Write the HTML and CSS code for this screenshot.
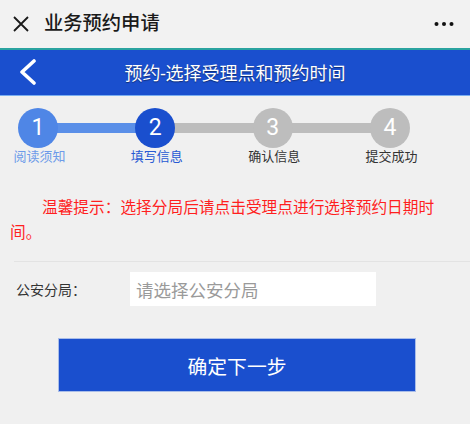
FILE: index.html
```html
<!DOCTYPE html>
<html lang="zh-CN">
  <head>
    <meta charset="UTF-8" />
    <meta name="viewport" content="width=device-width, initial-scale=1.0" />
    <title>业务预约申请</title>
    <link rel="stylesheet" href="styles.css">
  </head>
  <body>
    <div class="topbar">
      <svg class="topbar-close" width="18" height="18" viewBox="0 0 18 18">
        <path d="M2 2 L16 16 M16 2 L2 16" stroke="#1a1a1a" stroke-width="1.8" fill="none" />
      </svg>
      <h1 class="topbar-title">业务预约申请</h1>
      <svg class="topbar-more" width="20" height="6" viewBox="0 0 20 6">
        <circle cx="2.5" cy="3" r="2" fill="#111" />
        <circle cx="10" cy="3" r="2" fill="#111" />
        <circle cx="17.5" cy="3" r="2" fill="#111" />
      </svg>
    </div>

    <nav class="navbar">
      <a class="navbar-back" href="#">
        <svg width="20" height="26" viewBox="0 0 20 26">
          <polyline points="16,2 4,13 16,24" stroke="#fff" stroke-width="3.6" fill="none" stroke-linecap="round" stroke-linejoin="round" />
        </svg>
      </a>
      <span class="navbar-title">预约-选择受理点和预约时间</span>
    </nav>

    <div class="steps">
      <div class="step step--done">
        <span class="step__num">1</span>
        <span class="step__label">阅读须知</span>
      </div>
      <div class="step-line step-line--done"></div>
      <div class="step step--active">
        <span class="step__num">2</span>
        <span class="step__label">填写信息</span>
      </div>
      <div class="step-line"></div>
      <div class="step">
        <span class="step__num">3</span>
        <span class="step__label">确认信息</span>
      </div>
      <div class="step-line"></div>
      <div class="step">
        <span class="step__num">4</span>
        <span class="step__label">提交成功</span>
      </div>
    </div>

    <p class="notice">温馨提示：选择分局后请点击受理点进行选择预约日期时间。</p>

    <div class="form-row">
      <label class="form-row__label">公安分局：</label>
      <input class="form-row__input" type="text" placeholder="请选择公安分局" />
    </div>

    <button class="btn-next">确定下一步</button>
  </body>
</html>
```

FILE: styles.css
```css
:root {
  --color-primary: #1a4fce;
  --color-done: #4f86e6;
  --color-gray: #bdbdbd;
}
body {
  margin: 0;
  background: #f0f0f0;
  font-family: Roboto, "Noto Sans CJK SC", sans-serif;
}

.topbar {
  display: flex;
  align-items: center;
  height: 48px;
  padding: 0 16px 0 12px;
  background: #f2f2f2;
  box-sizing: border-box;
}
.topbar-close {
  display: block;
}
.topbar-title {
  flex: 1;
  margin: 0 0 0 14px;
  font-size: 19.3px;
  font-weight: 500;
  color: #1a1a1a;
  line-height: 1;
}
.topbar-more {
  display: block;
}

.navbar {
  position: relative;
  display: flex;
  align-items: center;
  justify-content: center;
  height: 45px;
  background: var(--color-primary);
  border-top: 2px solid #2aa3a0;
  border-bottom: 1px solid #79aef0;
}
.navbar-back {
  position: absolute;
  left: 18px;
  top: 9px;
}
.navbar-back svg {
  display: block;
}
.navbar-title {
  color: #fff;
  font-size: 18px;
  text-shadow: 0 1px 1px rgba(0, 0, 0, 0.45);
  margin-top: -2px;
}

.steps {
  display: flex;
  align-items: flex-start;
  padding: 12px 60px 0 18px;
}
.step {
  display: flex;
  flex-direction: column;
  align-items: center;
  width: 40px;
  position: relative;
  z-index: 1;
}
.step__num {
  width: 40px;
  height: 40px;
  border-radius: 50%;
  background: var(--color-gray);
  color: #fff;
  font-size: 23px;
  line-height: 40px;
  text-align: center;
}
.step__label {
  white-space: nowrap;
  font-size: 13px;
  line-height: 15px;
  margin-top: 1px;
  margin-left: 3px;
  color: #333;
}
.step--done .step__num {
  background: var(--color-done);
}
.step--done .step__label {
  color: #6d9be9;
}
.step--active .step__num {
  background: var(--color-primary);
}
.step--active .step__label {
  color: #2759d3;
}
.step-line {
  flex: 1;
  height: 10px;
  margin: 15px -2px 0;
  background: var(--color-gray);
}
.step-line--done {
  background: #5a8fe8;
}

.notice {
  margin: 31px 0 0;
  padding: 0 10px;
  text-indent: 32px;
  font-size: 15.7px;
  line-height: 25px;
  color: #ff1f1f;
}

.form-row {
  display: flex;
  align-items: center;
  margin: 16px 0 0 14px;
  padding-top: 10px;
  border-top: 1px solid #e3e3e3;
}
.form-row__label {
  width: 114px;
  padding-left: 2px;
  font-size: 14px;
  color: #333;
}
.form-row__input {
  width: 246px;
  height: 34px;
  margin: 0;
  padding: 0 6px;
  border: none;
  background: #fff;
  box-sizing: border-box;
  font-family: "Noto Sans CJK SC", sans-serif;
  font-size: 17.5px;
  outline: none;
}
.form-row__input::placeholder {
  color: #9a9a9a;
}

.btn-next {
  display: block;
  width: 358px;
  height: 54px;
  margin: 32px 0 0 58px;
  background: var(--color-primary);
  border: 1px solid #a9bde9;
  color: #fff;
  font-family: "Noto Sans CJK SC", sans-serif;
  font-size: 19.8px;
  cursor: pointer;
}
```
